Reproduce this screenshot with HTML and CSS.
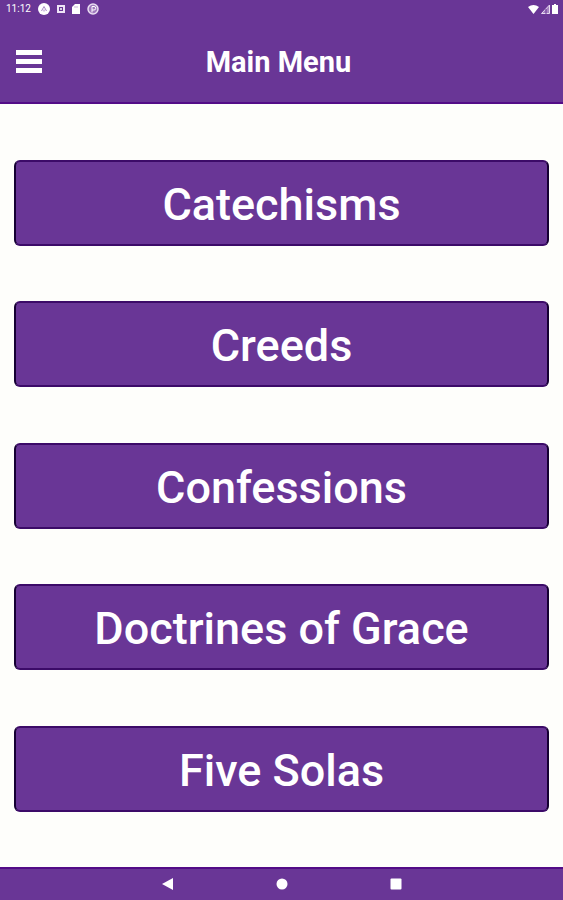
FILE: index.html
```html
<!DOCTYPE html>
<html lang="en">
<head>
<meta charset="utf-8">
<meta name="viewport" content="width=device-width, initial-scale=1">
<title>Main Menu</title>
<link rel="stylesheet" href="styles.css">
</head>
<body>
<div class="status">
  <div class="status-group">
    <span class="clock">11:12</span>
    <svg width="12" height="12" viewBox="0 0 12 12"><circle cx="6" cy="6" r="6" fill="#fff"/><path d="M3.5 8 6 3.5 8.500 8M6 6.500v2" fill="none" stroke="#a988c6"/></svg>
    <svg width="8" height="12" viewBox="0 0 8 12"><path d="M0 2h8v8H0z" fill="#efe5f7"/><path d="M2 4h4v4H2z" fill="#693696"/><circle cx="4" cy="6" r="1" fill="#fff"/></svg>
    <svg width="8" height="12" viewBox="0 0 8 12"><path d="M3 1h5v10H0V4z" fill="#fff"/><path d="M3 3v2M5 3v2" stroke="#cbb6dc"/></svg>
    <svg width="12" height="12" viewBox="0 0 12 12"><circle cx="6" cy="6" r="5" fill="#9f7abd" stroke="#eadff2" stroke-width="1.500"/><path d="M5 9.500V3.500h2a1.500 1.500 0 0 1 0 3.500H5" fill="none" stroke="#fff"/></svg>
  </div>
  <div class="status-group status-right">
    <svg width="11" height="10" viewBox="0 0 11 10"><path d="M0 3Q5.500-1 11 3L5.500 10z" fill="#fff"/></svg>
    <svg width="9" height="10" viewBox="0 0 9 10"><path d="M.5 9.500 8.500 1v8.500z" fill="#a785c3" stroke="#e7daf1"/><path d="M5 5v5" stroke="#693696"/></svg>
    <svg width="6" height="10" viewBox="0 0 6 10"><path d="M2 0h2v1h2v9H0V1h2z" fill="#fff"/></svg>
  </div>
</div>
<header class="header">
  <button class="menu" type="button" aria-label="Open menu">
    <svg width="28" height="24" viewBox="0 0 28 24"><path d="M1 0h26v5H1zM1 9h26v5H1zM1 18h26v5H1z" fill="#fff"/></svg>
  </button>
  <h1 class="title">Main Menu</h1>
</header>
<main class="list">
  <button class="item" type="button">Catechisms</button>
  <button class="item" type="button">Creeds</button>
  <button class="item" type="button">Confessions</button>
  <button class="item" type="button">Doctrines of Grace</button>
  <button class="item" type="button">Five Solas</button>
</main>
<nav class="nav">
  <button class="key" type="button" aria-label="Back"><svg width="12" height="12" viewBox="0 0 12 12"><path d="M0 6 11 0v12z" fill="#fff"/></svg></button>
  <button class="key" type="button" aria-label="Home"><svg width="12" height="12" viewBox="0 0 12 12"><circle cx="6" cy="6" r="5.500" fill="#fff"/></svg></button>
  <button class="key" type="button" aria-label="Recent apps"><svg width="12" height="12" viewBox="0 0 12 12"><rect x="0.500" y="0.500" width="11" height="11" rx="1" fill="#fff"/></svg></button>
</nav>
</body>
</html>
```
FILE: styles.css
```css
* {
  box-sizing: border-box;
}

body {
  margin: 0;
  min-height: 100vh;
  display: flex;
  flex-direction: column;
  background: #fefefb;
  color: #fff;
  font-family: Roboto, sans-serif;
}

button {
  font: inherit;
  color: inherit;
  background: none;
  border: 0;
  padding: 0;
  cursor: pointer;
}

svg {
  display: block;
}

.status {
  display: flex;
  justify-content: space-between;
  align-items: center;
  height: 18px;
  padding: 0 5px 0 6px;
  background: #693696;
}

.status-group {
  display: flex;
  align-items: center;
  gap: 7px;
}

.status-right {
  gap: 2px;
}

.clock {
  font-size: 10px;
  line-height: 18px;
}

.header {
  display: grid;
  grid-template-columns: 28px 1fr 34px;
  align-items: center;
  height: 86px;
  padding: 4px 15px 0;
  background: #693696;
  border-bottom: 2px solid #530c87;
}

.title {
  margin: 0;
  text-align: center;
  font-size: 29px;
  line-height: 36px;
  font-weight: 700;
}

.list {
  flex: 1;
  display: flex;
  flex-direction: column;
  justify-content: space-evenly;
  padding: 0 14px;
}

.item {
  padding: 16px 14px 12px;
  background: #693696;
  border: 2px solid #160033;
  border-top-color: #3c0b68;
  border-bottom-color: #3c0b68;
  border-radius: 6px;
  font-size: 45px;
  line-height: 54px;
  font-weight: 500;
}

.nav {
  display: flex;
  justify-content: center;
  align-items: center;
  gap: 102px;
  height: 33px;
  padding-bottom: 2px;
  background: #693696;
  border-top: 2px solid #530c87;
}
```
